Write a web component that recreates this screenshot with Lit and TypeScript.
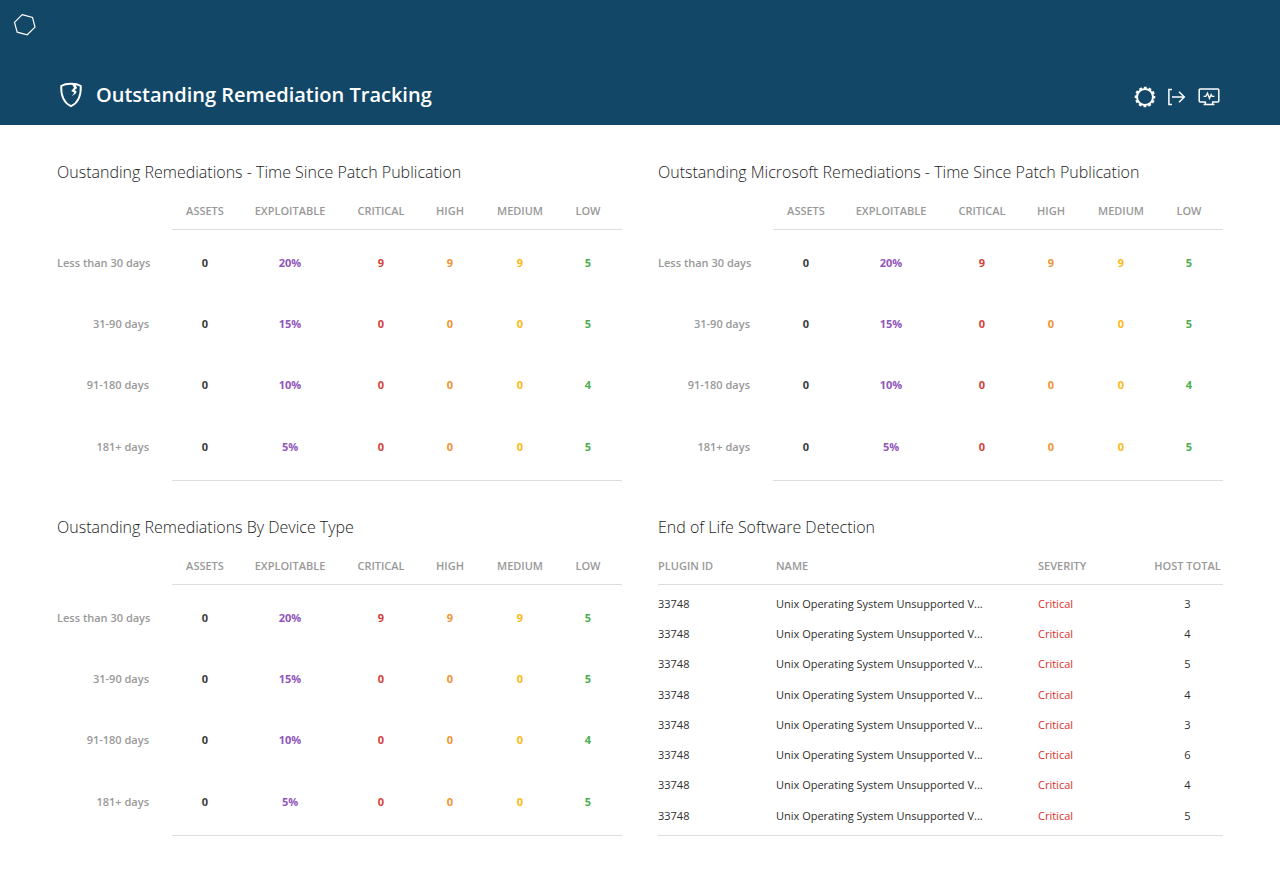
import { LitElement, html, css } from "lit";
import { customElement, property } from "lit/decorators.js";

const SEVERITIES = ["Assets", "Exploitable", "Critical", "High", "Medium", "Low"];

interface AgeRow {
  label: string;
  values: string[];
}

const AGE_ROWS: AgeRow[] = [
  { label: "Less than 30 days", values: ["0", "20%", "9", "9", "9", "5"] },
  { label: "31-90 days", values: ["0", "15%", "0", "0", "0", "5"] },
  { label: "91-180 days", values: ["0", "10%", "0", "0", "0", "4"] },
  { label: "181+ days", values: ["0", "5%", "0", "0", "0", "5"] },
];

const HOST_TOTALS = [3, 4, 5, 4, 3, 6, 4, 5];

const panelStyles = css`
  :host {
    display: block;
  }
  h2 {
    margin: 0 0 9px;
    font-size: 16px;
    line-height: 22px;
    font-weight: 300;
    color: #1c1c1c;
  }
  table {
    width: 100%;
    table-layout: fixed;
    border-collapse: separate;
    border-spacing: 0;
    font-size: 11px;
    line-height: 16px;
  }
  th,
  td {
    box-sizing: border-box;
    padding: 0;
    white-space: nowrap;
  }
  thead th {
    height: 38px;
    padding-top: 1px;
    font-weight: 600;
    color: #999999;
    text-transform: uppercase;
  }
`;

@customElement("remediation-panel")
export class RemediationPanel extends LitElement {
  @property() heading = "";

  static styles = [
    panelStyles,
    css`
      .col-label { width: 115px; }
      .col-assets { width: 66px; }
      .col-exploitable { width: 104px; }
      .col-critical { width: 78px; }
      .col-high { width: 60px; }
      .col-medium { width: 80px; }
      .col-low { width: 62px; }
      thead th,
      tbody tr:last-child td {
        border-bottom: 1px solid #dddddd;
      }
      tbody th {
        padding-right: 23px;
        text-align: right;
        font-weight: 600;
        color: #999999;
      }
      tbody th,
      tbody td {
        height: 61px;
      }
      tbody td {
        text-align: center;
        font-weight: 700;
      }
      tbody tr:first-child > * {
        height: 63px;
        padding-top: 2px;
      }
      tbody tr:nth-child(3) > * {
        height: 62px;
      }
      tbody tr:last-child > * {
        height: 65px;
        padding-bottom: 3px;
      }
      thead .low,
      tbody .low {
        padding-right: 6px;
      }
      tbody .assets { color: #3c3c3c; }
      tbody .exploitable { color: #9156bb; }
      tbody .critical { color: #d43f3a; }
      tbody .high { color: #ee9336; }
      tbody .medium { color: #fdb813; }
      tbody .low { color: #4cae4c; }
    `,
  ];

  render() {
    return html`
      <h2 id="heading">${this.heading}</h2>
      <table aria-labelledby="heading">
        <colgroup>
          <col class="col-label" />
          ${SEVERITIES.map((s) => html`<col class="col-${s.toLowerCase()}" />`)}
        </colgroup>
        <thead>
          <tr>
            <td></td>
            ${SEVERITIES.map((s) => html`<th scope="col" class=${s.toLowerCase()}>${s}</th>`)}
          </tr>
        </thead>
        <tbody>
          ${AGE_ROWS.map(
            (row) => html`<tr>
              <th scope="row">${row.label}</th>
              ${row.values.map((v, i) => html`<td class=${SEVERITIES[i].toLowerCase()}>${v}</td>`)}
            </tr>`
          )}
        </tbody>
      </table>
    `;
  }
}

@customElement("software-panel")
export class SoftwarePanel extends LitElement {
  static styles = [
    panelStyles,
    css`
      .col-id { width: 118px; }
      .col-name { width: 262px; }
      .col-severity { width: 114px; }
      .col-total { width: 71px; }
      thead th,
      tbody tr:last-child td {
        border-bottom: 1px solid #dddddd;
      }
      th,
      td {
        text-align: left;
      }
      tbody td {
        height: 30px;
        color: #2e2e2e;
      }
      tbody tr:nth-child(4n) td {
        height: 31px;
      }
      tbody tr:first-child td {
        height: 34px;
        padding-top: 4px;
      }
      tbody tr:last-child td {
        height: 36px;
        padding-bottom: 4px;
      }
      tbody .severity {
        color: #d9302c;
      }
      th.total,
      td.total {
        text-align: center;
      }
    `,
  ];

  render() {
    return html`
      <h2 id="heading">End of Life Software Detection</h2>
      <table aria-labelledby="heading">
        <colgroup>
          <col class="col-id" />
          <col class="col-name" />
          <col class="col-severity" />
          <col class="col-total" />
        </colgroup>
        <thead>
          <tr>
            <th scope="col">Plugin ID</th>
            <th scope="col">Name</th>
            <th scope="col">Severity</th>
            <th scope="col" class="total">Host Total</th>
          </tr>
        </thead>
        <tbody>
          ${HOST_TOTALS.map(
            (total) => html`<tr>
              <td>33748</td>
              <td>Unix Operating System Unsupported V...</td>
              <td class="severity">Critical</td>
              <td class="total">${total}</td>
            </tr>`
          )}
        </tbody>
      </table>
    `;
  }
}

@customElement("app-root")
export class AppRoot extends LitElement {
  static styles = css`
    :host {
      display: block;
      min-height: 100vh;
      background: #ffffff;
      font-family: "Open Sans", "Noto Sans", sans-serif;
    }
    header {
      display: flex;
      flex-direction: column;
      justify-content: space-between;
      box-sizing: border-box;
      min-height: 125px;
      padding: 13px 60px 15px 13px;
      background: #124768;
      color: #ffffff;
    }
    svg {
      display: block;
      fill: none;
      stroke: currentColor;
    }
    a,
    button {
      display: block;
      padding: 0;
      border: 0;
      background: none;
      color: inherit;
      cursor: pointer;
    }
    .home {
      align-self: flex-start;
    }
    .title-bar {
      display: flex;
      align-items: center;
      padding-left: 46px;
    }
    h1 {
      flex: 1;
      margin: 0 0 0 13px;
      font-size: 20px;
      line-height: 30px;
      font-weight: 600;
    }
    .actions {
      display: flex;
      align-items: center;
      gap: 10px;
      padding-top: 4px;
    }
    main {
      display: grid;
      grid-template-columns: 1fr 1fr;
      gap: 35px 36px;
      padding: 36px 57px 41px;
    }
  `;

  render() {
    return html`
      <header>
        <a class="home" href="#" aria-label="Home">
          <svg width="24" height="24" viewBox="0 0 24 24" stroke-width="1.2">
            <path d="M9.2 1.7 19.5 4.4 22 14.1 14.2 21.8 4.2 19.2 1.5 9.4Z" />
          </svg>
        </a>
        <div class="title-bar">
          <svg width="24" height="26" viewBox="0 0 24 26" aria-hidden="true">
            <path d="M12 1.8C8.4 1.8 4.8 2.4 2.2 4.1 1.9 13.2 4.4 20.6 12 24.2 19.6 20.6 22.1 13.2 21.8 4.1 19.2 2.4 15.6 1.8 12 1.8Z" stroke-width="1.9" />
            <path d="M12 1.6 17.3 1.8 17 4 18.2 6 15.6 8 17.5 9.2 17 11.3 12.8 14.2 14.6 11.8 15.2 10.6 12.2 9 15 5.7 13.6 3.2Z" fill="currentColor" stroke="none" />
          </svg>
          <h1>Outstanding Remediation Tracking</h1>
          <div class="actions">
            <button type="button" aria-label="Settings">
              <svg width="22" height="22" viewBox="0 0 22 22">
                <circle cx="11" cy="11" r="8" stroke-width="2" />
                <circle cx="11" cy="11" r="9.2" stroke-width="2.2" stroke-dasharray="2.8 2.017" stroke-dashoffset="1.4" />
              </svg>
            </button>
            <button type="button" aria-label="Export">
              <svg width="22" height="22" viewBox="0 0 22 22" stroke-width="1.5">
                <path d="M6 3.4H2.9V18.6H6M6 11H18.2M13 5.8 18.3 11 13 16.2" />
              </svg>
            </button>
            <button type="button" aria-label="Monitor">
              <svg width="22" height="22" viewBox="0 0 22 22" stroke-width="1.5">
                <path d="M7.4 15.9H2.2A1 1 0 0 1 1.2 14.9V4A1 1 0 0 1 2.2 3H19.8A1 1 0 0 1 20.8 4V14.9A1 1 0 0 1 19.8 15.9H14.6M7.4 15.4V18.6M14.6 15.4V18.6M5.6 18.6H16.4" />
                <path d="M5.6 10.4H7.9L9.5 7.2 11.5 12.4 13.1 8.6 14.1 10.4H16.4" stroke-width="1.3" />
              </svg>
            </button>
          </div>
        </div>
      </header>
      <main>
        <remediation-panel heading="Oustanding Remediations - Time Since Patch Publication"></remediation-panel>
        <remediation-panel heading="Outstanding Microsoft Remediations - Time Since Patch Publication"></remediation-panel>
        <remediation-panel heading="Oustanding Remediations By Device Type"></remediation-panel>
        <software-panel></software-panel>
      </main>
    `;
  }
}
